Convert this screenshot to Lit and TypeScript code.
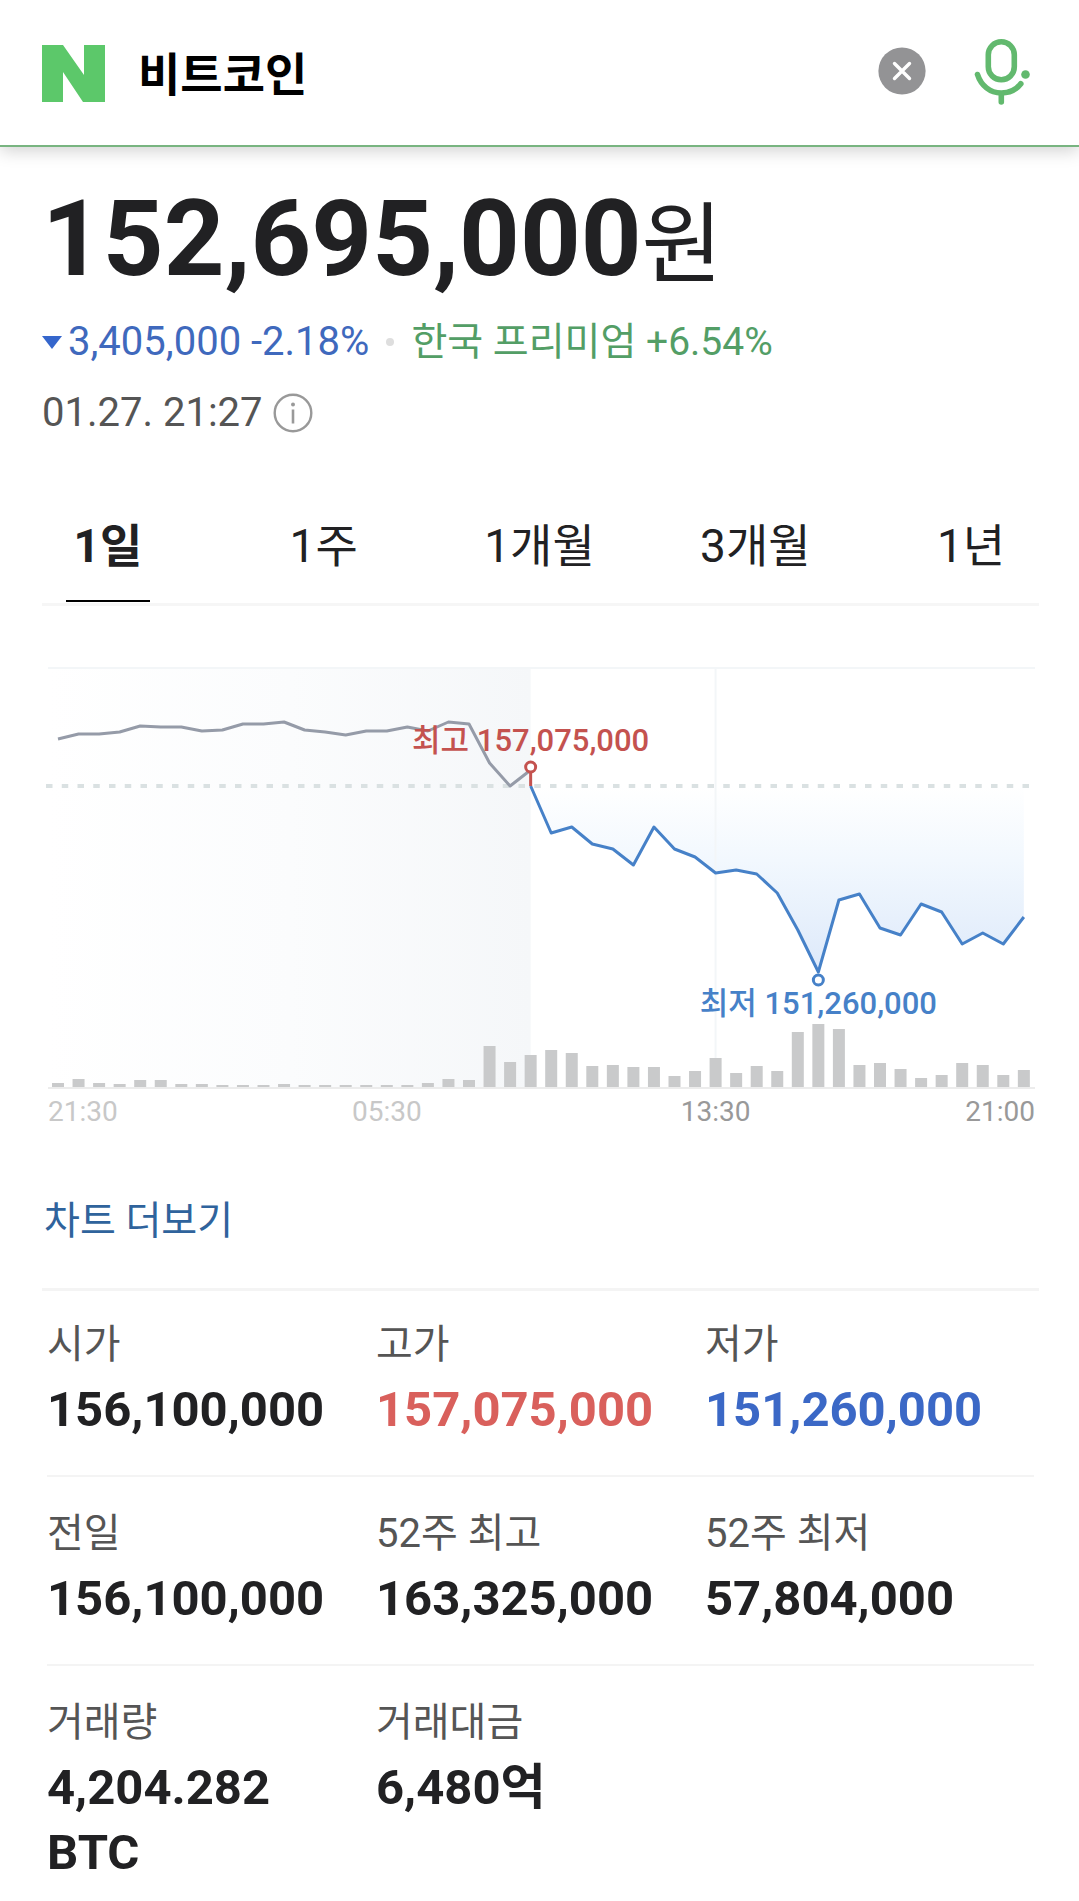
import { LitElement, html, svg, css } from "lit";
import { customElement, state } from "lit/decorators.js";
import { classMap } from "lit/directives/class-map.js";

const FIRST_X = 16;
const STEP = 20.55;
const BASELINE = 481;
const PREV_CLOSE = 180;
const px = (i: number) => FIRST_X + i * STEP;

// Price line before the session opens, then from the opening onwards.
const NIGHT = [
  133, 128, 128, 126, 120, 121, 121, 125, 124, 118, 118, 116, 124, 126, 129,
  125, 125, 121, 125, 116, 118, 157, 180, 164,
];
const OPEN_INDEX = 23;
const DAY = [
  180, 227, 221, 238, 243, 259, 221, 243, 251, 267, 264, 268, 287, 324, 366,
  294, 288, 322, 329, 298, 306, 338, 327, 338, 311,
];
const LOW_INDEX = 37;
const VOLUME = [
  4, 8, 4, 3, 7, 7, 3, 3, 2, 2, 2, 3, 2, 2, 2, 2, 2, 2, 4, 8, 7, 41, 25, 32,
  37, 34, 21, 22, 20, 20, 11, 16, 29, 14, 21, 16, 55, 63, 58, 22, 24, 18, 9,
  12, 24, 22, 12, 17,
];

@customElement("price-chart")
class PriceChart extends LitElement {
  static styles = css`
    :host {
      display: block;
    }
    .chart {
      display: block;
      width: 100%;
      height: auto;
      font-family: Roboto, "Noto Sans CJK KR", sans-serif;
    }
    .grid {
      stroke: #f3f6f8;
      stroke-width: 2;
    }
    .axis {
      stroke: #ececec;
      stroke-width: 2;
    }
    .previous {
      stroke: #dae1e2;
      stroke-width: 4;
      stroke-dasharray: 6.5 9.25;
    }
    .bar {
      fill: #c9cacb;
    }
    .line {
      fill: none;
      stroke-width: 3;
      stroke-linejoin: round;
    }
    .night {
      stroke: #959ba8;
    }
    .day {
      stroke: #4681c8;
    }
    .mark {
      fill: #fff;
      stroke-width: 3;
    }
    .mark-high {
      stroke: #c4524f;
    }
    .mark-low {
      stroke: #4681c8;
    }
    .label {
      font-size: 31px;
      font-weight: 500;
      text-anchor: middle;
    }
    .high {
      fill: #c4524f;
    }
    .low {
      fill: #4681c8;
    }
    .time {
      font-size: 28px;
      fill: #999;
    }
    .past {
      fill: #c8c8c8;
    }
    .middle {
      text-anchor: middle;
    }
    .end {
      text-anchor: end;
    }
  `;

  render() {
    const night = NIGHT.map((y, i) => `${px(i)},${y}`).join(" ");
    const day = DAY.map((y, i) => `${px(i + OPEN_INDEX)},${y}`).join(" ");
    const openX = px(OPEN_INDEX);
    const lowX = px(LOW_INDEX);
    const lastX = px(VOLUME.length - 1);
    return html`
      <svg class="chart" viewBox="0 0 997 534" role="img" aria-label="비트코인 1일 차트">
        <defs>
          <linearGradient id="shade" x1="0" x2="1" y1="0" y2="0">
            <stop offset="0" stop-color="#fff" />
            <stop offset="0.5" stop-color="#fbfcfd" />
            <stop offset="1" stop-color="#f5f7f9" />
          </linearGradient>
          <linearGradient id="fall" x1="0" x2="0" y1="0" y2="1">
            <stop offset="0" stop-color="#fff" />
            <stop offset="0.4" stop-color="#f2f8fe" />
            <stop offset="1" stop-color="#dde9fa" />
          </linearGradient>
        </defs>
        <rect x="6" y="62" width=${openX - 6} height="419" fill="url(#shade)" />
        <line class="grid" x1="6" x2="993" y1="62" y2="62" />
        <polygon points="${day} ${lastX},${PREV_CLOSE}" fill="url(#fall)" />
        <line class="grid" x1=${px(32)} x2=${px(32)} y1="62" y2=${BASELINE} />
        <line class="previous" x1="4" x2="988" y1=${PREV_CLOSE} y2=${PREV_CLOSE} />
        ${VOLUME.map(
          (v, i) => svg`<rect class="bar" x=${px(i) - 6} y=${BASELINE - v} width="12" height=${v} />`,
        )}
        <line class="axis" x1="6" x2="993" y1="482" y2="482" />
        <polyline class="line night" points=${night} />
        <polyline class="line day" points=${day} />
        <line class="mark mark-high" x1=${openX} x2=${openX} y1="167" y2="180" />
        <circle class="mark mark-high" cx=${openX} cy="161" r="5" />
        <circle class="mark mark-low" cx=${lowX} cy="374" r="5" />
        <text class="label high" x=${openX} y="145">최고 157,075,000</text>
        <text class="label low" x=${lowX} y="408">최저 151,260,000</text>
        <text class="time past" x="6" y="515">21:30</text>
        <text class="time past middle" x=${px(16)} y="515">05:30</text>
        <text class="time middle" x=${px(32)} y="515">13:30</text>
        <text class="time end" x="993" y="515">21:00</text>
      </svg>
    `;
  }
}

interface Stat {
  label: string;
  value: string;
  tone?: "up" | "down";
}

const STATS: Stat[][] = [
  [
    { label: "시가", value: "156,100,000" },
    { label: "고가", value: "157,075,000", tone: "up" },
    { label: "저가", value: "151,260,000", tone: "down" },
  ],
  [
    { label: "전일", value: "156,100,000" },
    { label: "52주 최고", value: "163,325,000" },
    { label: "52주 최저", value: "57,804,000" },
  ],
  [
    { label: "거래량", value: "4,204.282 BTC" },
    { label: "거래대금", value: "6,480억" },
  ],
];

const PERIODS = ["1일", "1주", "1개월", "3개월", "1년"];

@customElement("app-root")
class AppRoot extends LitElement {
  @state() private period = "1일";
  @state() private query = "비트코인";

  static styles = css`
    :host {
      display: block;
      background: #fff;
      color: #212123;
      font-family: Roboto, "Noto Sans CJK KR", sans-serif;
    }
    button {
      padding: 0;
      border: 0;
      background: none;
      color: inherit;
      font: inherit;
      cursor: pointer;
    }
    svg {
      display: block;
    }
    .search {
      display: flex;
      align-items: center;
      height: 145px;
      padding: 0 48px 0 42px;
      border-bottom: 2px solid #78b480;
      box-shadow: 0 4px 16px rgba(0, 0, 0, 0.18);
    }
    .home {
      padding-top: 2px;
    }
    .query {
      flex: 1;
      min-width: 0;
      margin: 0 32px 0 33px;
      padding: 4px 0 0;
      border: 0;
      outline: 0;
      background: none;
      color: #000;
      font: 700 46px/64px Roboto, "Noto Sans CJK KR", sans-serif;
    }
    .clear {
      margin-right: 47px;
      padding-bottom: 4px;
    }
    .voice {
      padding-bottom: 2px;
    }
    .summary {
      padding: 30px 42px 0;
    }
    .price {
      margin: 0;
      font-size: 106px;
      font-weight: 700;
      line-height: 124px;
    }
    .unit {
      font-size: 88px;
      font-weight: 400;
      line-height: 88px;
    }
    .line {
      display: flex;
      align-items: center;
      margin: 11px 0 0;
      font-size: 40px;
      line-height: 60px;
    }
    .change {
      display: flex;
      align-items: center;
      gap: 6px;
      color: #3f69bd;
    }
    .dot {
      width: 8px;
      height: 8px;
      margin: 0 17px;
      border-radius: 50%;
      background: #dedede;
    }
    .premium {
      color: #539e66;
      font-size: 39px;
    }
    .date {
      color: #555;
    }
    .info {
      margin-left: 10px;
    }
    .tabs {
      display: grid;
      grid-template-columns: repeat(5, 1fr);
      margin-top: 73px;
    }
    .tab {
      justify-self: center;
      min-width: 84px;
      padding: 0 0 24px;
      border-bottom: 2px solid transparent;
      font-size: 46px;
      line-height: 60px;
    }
    .selected {
      border-color: #000;
      font-weight: 700;
    }
    .body {
      margin: 1px 40px 0 42px;
      border-top: 3px solid #f6f6f6;
    }
    .more {
      display: inline-block;
      margin: 57px 0 43px 2px;
      color: #2f639c;
      font-size: 39px;
      line-height: 48px;
      text-decoration: none;
    }
    .stats {
      padding: 0 5px;
      border-top: 3px solid #f4f4f4;
    }
    .row {
      display: grid;
      grid-template-columns: repeat(3, 1fr);
      margin: 0;
      padding: 33px 0;
      border-top: 2px solid #f4f4f4;
    }
    .row:first-child {
      padding-top: 30px;
      border-top: 0;
    }
    .row:last-child {
      padding-bottom: 14px;
    }
    .label {
      color: #555;
      font-size: 40px;
      line-height: 48px;
    }
    .value {
      margin: 8px 0 0;
      padding-right: 40px;
      font-size: 49px;
      font-weight: 700;
      line-height: 65px;
    }
    .up {
      color: #d9605c;
    }
    .down {
      color: #3b68c6;
    }
  `;

  private onInput(e: Event) {
    this.query = (e.target as HTMLInputElement).value;
  }

  render() {
    return html`
      <header class="search">
        <a class="home" href="#home" aria-label="홈">
          <svg width="63" height="57" viewBox="0 0 63 57">
            <path d="M0 0H21L42 30V0H63V57H41L21 27V57H0Z" fill="#5cc86a" />
          </svg>
        </a>
        <input
          class="query"
          type="text"
          aria-label="검색어"
          .value=${this.query}
          @input=${this.onInput}
        />
        <button class="clear" aria-label="지우기" @click=${() => (this.query = "")}>
          <svg width="48" height="48" viewBox="0 0 48 48">
            <circle cx="24" cy="24" r="23.6" fill="#939395" />
            <path d="M16.5 16.5l15 15M31.5 16.5l-15 15" stroke="#fff" stroke-width="3.4" stroke-linecap="round" />
          </svg>
        </button>
        <button class="voice" aria-label="음성 검색">
          <svg width="58" height="68" viewBox="0 0 58 68" fill="none" stroke="#62b96e" stroke-width="5.6" stroke-linecap="round">
            <rect x="15.3" y="3.8" width="26" height="38" rx="13" />
            <path d="M4.5 36.5C8 47.5 17 55 28.3 55C36.5 55 43.5 51.5 47.8 45.8" />
            <path d="M28.3 56V64" />
            <circle cx="52.5" cy="36.5" r="4.3" fill="#62b96e" stroke="none" />
          </svg>
        </button>
      </header>

      <section class="summary">
        <h1 class="price">152,695,000<span class="unit">원</span></h1>
        <p class="line">
          <span class="change">
            <svg width="20" height="13" viewBox="0 0 20 13">
              <path d="M0 0H20L10 13Z" fill="#3566cc" />
            </svg>
            3,405,000 -2.18%
          </span>
          <span class="dot"></span>
          <span class="premium">한국 프리미엄 +6.54%</span>
        </p>
        <p class="line date">
          01.27. 21:27
          <button class="info" aria-label="안내">
            <svg width="40" height="40" viewBox="0 0 40 40">
              <circle cx="20" cy="20" r="18.3" fill="none" stroke="#999" stroke-width="2.4" />
              <circle cx="20" cy="11.5" r="2" fill="#999" />
              <path d="M20 16.5V30.5" stroke="#999" stroke-width="2.6" />
            </svg>
          </button>
        </p>
      </section>

      <div class="tabs" role="tablist">
        ${PERIODS.map(
          (p) => html`<button
            class=${classMap({ tab: true, selected: p === this.period })}
            role="tab"
            aria-selected=${p === this.period ? "true" : "false"}
            @click=${() => (this.period = p)}
          >${p}</button>`,
        )}
      </div>

      <div class="body">
        <price-chart></price-chart>
        <a class="more" href="#chart">차트 더보기</a>
        <div class="stats">
          ${STATS.map(
            (row) => html`<dl class="row">
              ${row.map(
                (s) => html`<div>
                  <dt class="label">${s.label}</dt>
                  <dd class=${classMap({ value: true, up: s.tone === "up", down: s.tone === "down" })}>${s.value}</dd>
                </div>`,
              )}
            </dl>`,
          )}
        </div>
      </div>
    `;
  }
}
